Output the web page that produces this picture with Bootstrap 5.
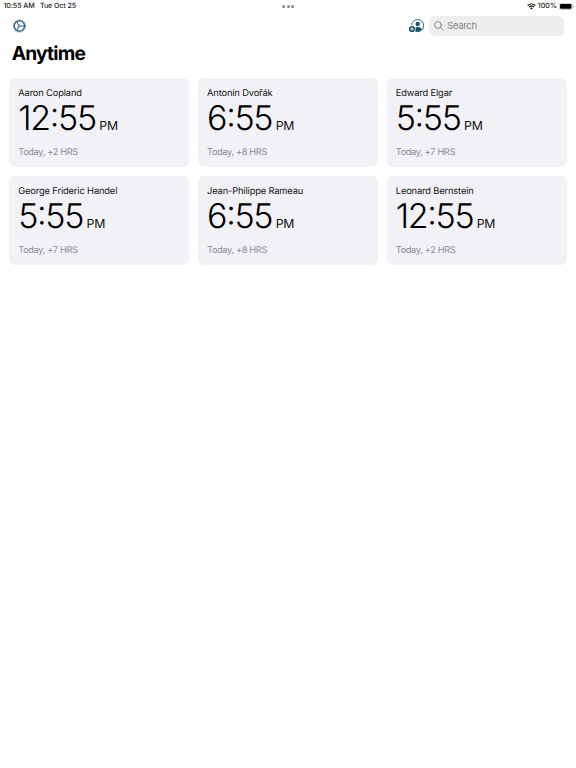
<!DOCTYPE html>
<html lang="en">
<head>
<meta charset="utf-8">
<meta name="viewport" content="width=device-width, initial-scale=1">
<title>Anytime</title>
<link href="https://cdn.jsdelivr.net/npm/bootstrap@5.3.0/dist/css/bootstrap.min.css" rel="stylesheet">
<style>
body{font-family:Inter,"Liberation Sans",sans-serif;color:#000;background:#fff;overflow:hidden;text-rendering:geometricPrecision}
svg{display:block;flex:none}
.status{height:12px;font-size:7.1px;font-weight:500;line-height:12px;letter-spacing:-.1px;padding:0 2.5px 0 3.5px;color:#222}
.date{margin-left:5.4px}
.pct{margin:0 1.5px 0 2px;letter-spacing:0}
.dots{left:282px;top:5px;gap:1.5px}
.dots i{width:3px;height:3px;background:#888}
.tools{height:28px;padding:0 12px 0 12px}
.search{width:135px;height:20px;border-radius:5.5px;background:#eee;color:#838387;font-size:9.6px;padding-left:5px}
.search input{font-size:inherit;line-height:20px;color:inherit;min-width:0;letter-spacing:-.35px;margin-left:3px}
.search input::placeholder{color:#838387;opacity:1}
h1{font-size:19.2px;line-height:26px;letter-spacing:-.8px;margin:0 0 12px 11.7px}
.clocks{display:grid;grid-template-columns:repeat(3,1fr);gap:9px;padding:0 9.5px 0 9.3px}
.clock{height:89px;border:0;border-radius:6px;background:#f2f1f6;padding:9px 9px 0}
.who{font-size:9.3px;line-height:14px;letter-spacing:-.14px;color:#111}
.time{font-size:34px;font-weight:270;line-height:36px;letter-spacing:-1.35px;height:38px;font-feature-settings:"case" 1}
.time small{font-size:12.3px;font-weight:400;letter-spacing:-.3px;margin-left:3.6px;color:#111}
.offset{font-size:9.2px;line-height:12px;letter-spacing:-.34px;color:#8a8a8f;margin-top:7.5px}
</style>
<script src="https://cdn.jsdelivr.net/npm/bootstrap@5.3.0/dist/js/bootstrap.bundle.min.js"></script>
</head>
<body>
<header>
<div class="status d-flex align-items-center position-relative">
  <span>10:55 AM</span><span class="date">Tue Oct 25</span>
  <div class="dots d-flex position-absolute"><i class="rounded-circle"></i><i class="rounded-circle"></i><i class="rounded-circle"></i></div>
  <svg class="ms-auto" width="9" height="7" viewBox="0 0 9 7" fill="none" stroke="#111" stroke-width="1.15"><path d="M.6 2.5C2.8.5 6.2.5 8.4 2.5M2 4.1C3.4 2.8 5.6 2.8 7 4.1"/><path d="M3.1 5.1Q4.5 4 5.9 5.1L4.5 6.6Z" fill="#111" stroke="none"/></svg>
  <span class="pct">100%</span>
  <svg width="15" height="7" viewBox="0 0 15 7"><rect x=".3" y=".3" width="12.9" height="6.2" rx="1.9" fill="none" stroke="#999" stroke-width=".5"/><rect x="1" y="1" width="11.5" height="4.8" rx="1.2" fill="#000"/><path d="M14 2.3v2.2c.8-.4.8-1.8 0-2.2" fill="#888"/></svg>
</div>
<div class="tools d-flex align-items-center">
  <button class="btn p-0 border-0" aria-label="Settings"><svg width="15" height="14" viewBox="-.4 0 15 14" fill="none" stroke="#1b5a7a"><circle cx="7" cy="7" r="5.1" stroke-width="1.2"/><circle cx="7" cy="7" r="6" stroke-width="1" stroke-dasharray="1.3 1.213"/><circle cx="6.7" cy="7" r="1.1" stroke-width=".8"/><path d="M7.8 7H12M6.2 6 4.3 2.6M6.2 8 4.3 11.4" stroke-width="1"/></svg></button>
  <button class="btn p-0 border-0 ms-auto me-1" aria-label="Add person"><svg width="17" height="14" viewBox="0 0 17 14"><circle cx="9.6" cy="6.6" r="6.1" fill="none" stroke="#215f80" stroke-width=".95"/><circle cx="9.7" cy="4.9" r="2.2" fill="#10506f"/><path d="M5.6 10.6C6 8.6 7.6 7.9 9.7 7.9s3.8.8 4.2 2.7a5.8 5.8 0 0 1-8.3 0" fill="#10506f"/><circle cx="4" cy="10" r="3.7" fill="#fff"/><circle cx="4" cy="10" r="3.1" fill="#10506f"/><path d="M2.2 10h3.6M4 8.2v3.6" stroke="#fff" stroke-width=".9"/></svg></button>
  <label class="search d-flex align-items-center"><svg width="10" height="10" viewBox="0 0 10 10" fill="none" stroke="#838387" stroke-width=".95" stroke-linecap="round"><circle cx="4" cy="4" r="3.4"/><path d="m6.5 6.5 2.7 2.7"/></svg><input class="border-0 bg-transparent p-0 flex-grow-1" placeholder="Search" aria-label="Search"></label>
</div>
</header>
<h1 class="fw-bold">Anytime</h1>
<main class="clocks">
  <article class="card clock"><div class="who">Aaron Copland</div><div class="time">12:55<small>PM</small></div><div class="offset">Today, +2 HRS</div></article>
  <article class="card clock"><div class="who">Antonín Dvořák</div><div class="time">6:55<small>PM</small></div><div class="offset">Today, +8 HRS</div></article>
  <article class="card clock"><div class="who">Edward Elgar</div><div class="time">5:55<small>PM</small></div><div class="offset">Today, +7 HRS</div></article>
  <article class="card clock"><div class="who">George Frideric Handel</div><div class="time">5:55<small>PM</small></div><div class="offset">Today, +7 HRS</div></article>
  <article class="card clock"><div class="who">Jean-Philippe Rameau</div><div class="time">6:55<small>PM</small></div><div class="offset">Today, +8 HRS</div></article>
  <article class="card clock"><div class="who">Leonard Bernstein</div><div class="time">12:55<small>PM</small></div><div class="offset">Today, +2 HRS</div></article>
</main>
</body>
</html>
